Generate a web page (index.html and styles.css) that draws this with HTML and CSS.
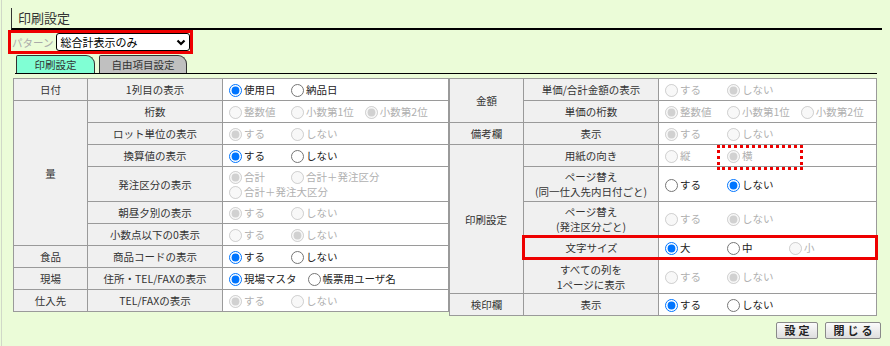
FILE: index.html
```html
<!DOCTYPE html>
<html lang="ja">
<head>
  <meta charset="UTF-8"/>
  <title>印刷設定</title>
  <link rel="stylesheet" href="styles.css">
</head>
<body>
  <div class="page">
    <h1 class="title">印刷設定</h1>

    <div class="pattern">
      <span class="pattern-label">パターン</span>
      <div class="select-wrap">
        <select>
          <option>総合計表示のみ</option>
        </select>
        <svg class="chevron" width="10" height="7" viewBox="0 0 10 7"><polyline points="1.5,1.5 5,5 8.5,1.5" fill="none" stroke="#000" stroke-width="2.2"/></svg>
      </div>
    </div>

    <div class="tabs">
      <span class="tab active">印刷設定</span>
      <span class="tab wide">自由項目設定</span>
    </div>

    <div class="tables">
      <!-- left -->
      <table class="grid left">
        <colgroup><col class="c1"><col class="c2"><col class="c3l"></colgroup>
        <tr>
          <td class="head">日付</td>
          <td class="head">1列目の表示</td>
          <td class="opts">
            <label class="opt"><input type="radio" name="l1" checked>使用日</label><label class="opt"><input type="radio" name="l1">納品日</label>
          </td>
        </tr>
        <tr>
          <td class="head" rowspan="6">量</td>
          <td class="head">桁数</td>
          <td class="opts off">
            <label class="opt"><input type="radio" name="l2" disabled>整数値</label><label class="opt"><input type="radio" name="l2" disabled>小数第1位</label><label class="opt"><input type="radio" name="l2" disabled checked>小数第2位</label>
          </td>
        </tr>
        <tr>
          <td class="head">ロット単位の表示</td>
          <td class="opts off">
            <label class="opt"><input type="radio" name="l3" disabled checked>する</label><label class="opt"><input type="radio" name="l3" disabled>しない</label>
          </td>
        </tr>
        <tr>
          <td class="head">換算値の表示</td>
          <td class="opts">
            <label class="opt"><input type="radio" name="l4" checked>する</label><label class="opt"><input type="radio" name="l4">しない</label>
          </td>
        </tr>
        <tr class="tall">
          <td class="head">発注区分の表示</td>
          <td class="opts off">
            <label class="opt"><input type="radio" name="l5" disabled checked>合計</label><label class="opt"><input type="radio" name="l5" disabled>合計＋発注区分</label><label class="opt"><input type="radio" name="l5" disabled>合計＋発注大区分</label>
          </td>
        </tr>
        <tr>
          <td class="head">朝昼夕別の表示</td>
          <td class="opts off">
            <label class="opt"><input type="radio" name="l6" disabled checked>する</label><label class="opt"><input type="radio" name="l6" disabled>しない</label>
          </td>
        </tr>
        <tr>
          <td class="head">小数点以下の0表示</td>
          <td class="opts off">
            <label class="opt"><input type="radio" name="l7" disabled>する</label><label class="opt"><input type="radio" name="l7" disabled checked>しない</label>
          </td>
        </tr>
        <tr>
          <td class="head">食品</td>
          <td class="head">商品コードの表示</td>
          <td class="opts">
            <label class="opt"><input type="radio" name="l8" checked>する</label><label class="opt"><input type="radio" name="l8">しない</label>
          </td>
        </tr>
        <tr>
          <td class="head">現場</td>
          <td class="head">住所・TEL/FAXの表示</td>
          <td class="opts">
            <label class="opt"><input type="radio" name="l9" checked>現場マスタ</label><label class="opt"><input type="radio" name="l9">帳票用ユーザ名</label>
          </td>
        </tr>
        <tr>
          <td class="head">仕入先</td>
          <td class="head">TEL/FAXの表示</td>
          <td class="opts off">
            <label class="opt"><input type="radio" name="l10" disabled checked>する</label><label class="opt"><input type="radio" name="l10" disabled>しない</label>
          </td>
        </tr>
      </table>

      <!-- right -->
      <table class="grid right">
        <colgroup><col class="c1"><col class="c2"><col class="c3r"></colgroup>
        <tr>
          <td class="head" rowspan="2">金額</td>
          <td class="head">単価/合計金額の表示</td>
          <td class="opts off">
            <label class="opt"><input type="radio" name="r1" disabled>する</label><label class="opt"><input type="radio" name="r1" disabled checked>しない</label>
          </td>
        </tr>
        <tr>
          <td class="head">単価の桁数</td>
          <td class="opts off">
            <label class="opt"><input type="radio" name="r2" disabled checked>整数値</label><label class="opt"><input type="radio" name="r2" disabled>小数第1位</label><label class="opt"><input type="radio" name="r2" disabled>小数第2位</label>
          </td>
        </tr>
        <tr>
          <td class="head">備考欄</td>
          <td class="head">表示</td>
          <td class="opts off">
            <label class="opt"><input type="radio" name="r3" disabled checked>する</label><label class="opt"><input type="radio" name="r3" disabled>しない</label>
          </td>
        </tr>
        <tr>
          <td class="head" rowspan="5">印刷設定</td>
          <td class="head">用紙の向き</td>
          <td class="opts off">
            <label class="opt"><input type="radio" name="r4" disabled>縦</label><label class="opt marked"><input type="radio" name="r4" disabled checked>横</label>
          </td>
        </tr>
        <tr class="tall">
          <td class="head">ページ替え<br>(同一仕入先内日付ごと)</td>
          <td class="opts">
            <label class="opt"><input type="radio" name="r5">する</label><label class="opt"><input type="radio" name="r5" checked>しない</label>
          </td>
        </tr>
        <tr class="tall">
          <td class="head">ページ替え<br>(発注区分ごと)</td>
          <td class="opts off">
            <label class="opt"><input type="radio" name="r6" disabled>する</label><label class="opt"><input type="radio" name="r6" disabled checked>しない</label>
          </td>
        </tr>
        <tr>
          <td class="head hl hl-l">文字サイズ</td>
          <td class="opts hl hl-r">
            <label class="opt"><input type="radio" name="r7" checked>大</label><label class="opt"><input type="radio" name="r7">中</label><label class="opt off"><input type="radio" name="r7" disabled>小</label>
          </td>
        </tr>
        <tr class="tall">
          <td class="head">すべての列を<br>1ページに表示</td>
          <td class="opts off">
            <label class="opt"><input type="radio" name="r8" disabled>する</label><label class="opt"><input type="radio" name="r8" disabled checked>しない</label>
          </td>
        </tr>
        <tr>
          <td class="head">検印欄</td>
          <td class="head">表示</td>
          <td class="opts">
            <label class="opt"><input type="radio" name="r9" checked>する</label><label class="opt"><input type="radio" name="r9">しない</label>
          </td>
        </tr>
      </table>
    </div>

    <div class="actions">
      <button type="button" class="btn">設定</button>
      <button type="button" class="btn wide">閉じる</button>
    </div>
  </div>
</body>
</html>
```

FILE: styles.css
```css
body {
  margin: 0;
  background-color: #ebfcd8;
  font-family: "Noto Sans CJK JP", "Noto Sans", sans-serif;
  font-size: 10.5px;
  color: #333;
}

.page {
  margin-left: 1px;
  border-left: 1px solid #d0d8c8;
  padding: 8px 8px 0 0;
  height: 338px;
}

.title {
  margin: 0 0 0 9px;
  height: 20px;
  line-height: 20px;
  padding-left: 6px;
  border-left: 1px solid #333;
  border-bottom: 2px solid #000;
  font-size: 13px;
  font-weight: normal;
  color: #333;
}

/* pattern selector */
.pattern {
  display: flex;
  align-items: center;
  width: max-content;
  margin-left: 6px;
  border: 3px solid #e00;
}

.pattern-label {
  color: #aaa;
  padding: 0 3px 0 1px;
}

.select-wrap {
  position: relative;
  height: 18px;
}

.select-wrap select {
  appearance: none;
  width: 134px;
  height: 18px;
  margin: 0;
  padding: 0 0 0 3px;
  border: 1px solid #000;
  border-radius: 3px;
  background: #fff;
  font-family: inherit;
  font-size: 11px;
  color: #000;
}

.chevron {
  position: absolute;
  right: 4px;
  top: 6px;
}

/* tabs */
.tabs {
  display: flex;
  gap: 4px;
  margin: 1px 5px 0 13px;
  padding-left: 1px;
  border-bottom: 1px solid #000;
}

.tab {
  width: 77px;
  height: 17px;
  line-height: 17px;
  text-align: center;
  border: 1px solid #333;
  border-bottom: none;
  border-radius: 2px 9px 0 0;
  background-color: #c0c0c0;
}

.tab.active {
  background-color: #80ffd4;
}

.tab.wide {
  width: 86px;
}

/* settings tables */
.tables {
  display: flex;
  align-items: flex-start;
  margin: 4px 0 0 11px;
}

.grid {
  border-collapse: collapse;
  table-layout: fixed;
}

.grid.left {
  width: 435px;
}

.grid.right {
  width: 427px;
}

.c1 { width: 74px; }
.c2 { width: 135px; }
.c3l { width: 226px; }
.c3r { width: 218px; }

.grid tr {
  height: 22px;
}

.grid tr.tall {
  height: 35px;
}

.grid td {
  border: 1px solid #9a9a9a;
  padding: 0 1px;
  line-height: 15px;
}

.grid td.head {
  background-color: #f0f0f0;
  text-align: center;
  color: #333;
}

.grid td.opts {
  background-color: #fff;
  color: #222;
}

.grid td.hl {
  border-top: 3px solid #e00;
  border-bottom: 3px solid #e00;
}

.grid td.hl-l {
  border-left: 3px solid #e00;
}

.grid td.hl-r {
  border-right: 3px solid #e00;
}

.opt {
  display: inline-block;
  min-width: 56px;
  margin-right: 6px;
  white-space: nowrap;
}

.opt input {
  width: 13px;
  height: 13px;
  margin: 0 2px 0 5px;
  vertical-align: -3px;
}

.off,
.opts.off .opt {
  color: #b0b0b0;
}

.opt.marked {
  position: relative;
}

.opt.marked::after {
  content: "";
  position: absolute;
  left: -5px;
  top: -3px;
  width: 86px;
  height: 25px;
  box-sizing: border-box;
  border: 3px dotted #e00;
}

/* buttons */
.actions {
  display: flex;
  justify-content: flex-end;
  gap: 7px;
  margin: 6px 1px 0 0;
}

.btn {
  width: 42px;
  height: 17px;
  padding: 0 0 0 3px;
  border: 1px solid #8a8a8a;
  border-radius: 2px;
  background: linear-gradient(#fbfbfb, #dedede);
  font-family: inherit;
  font-size: 11px;
  font-weight: bold;
  letter-spacing: 3px;
  line-height: 15px;
  color: #222;
}

.btn.wide {
  width: 56px;
}
```
